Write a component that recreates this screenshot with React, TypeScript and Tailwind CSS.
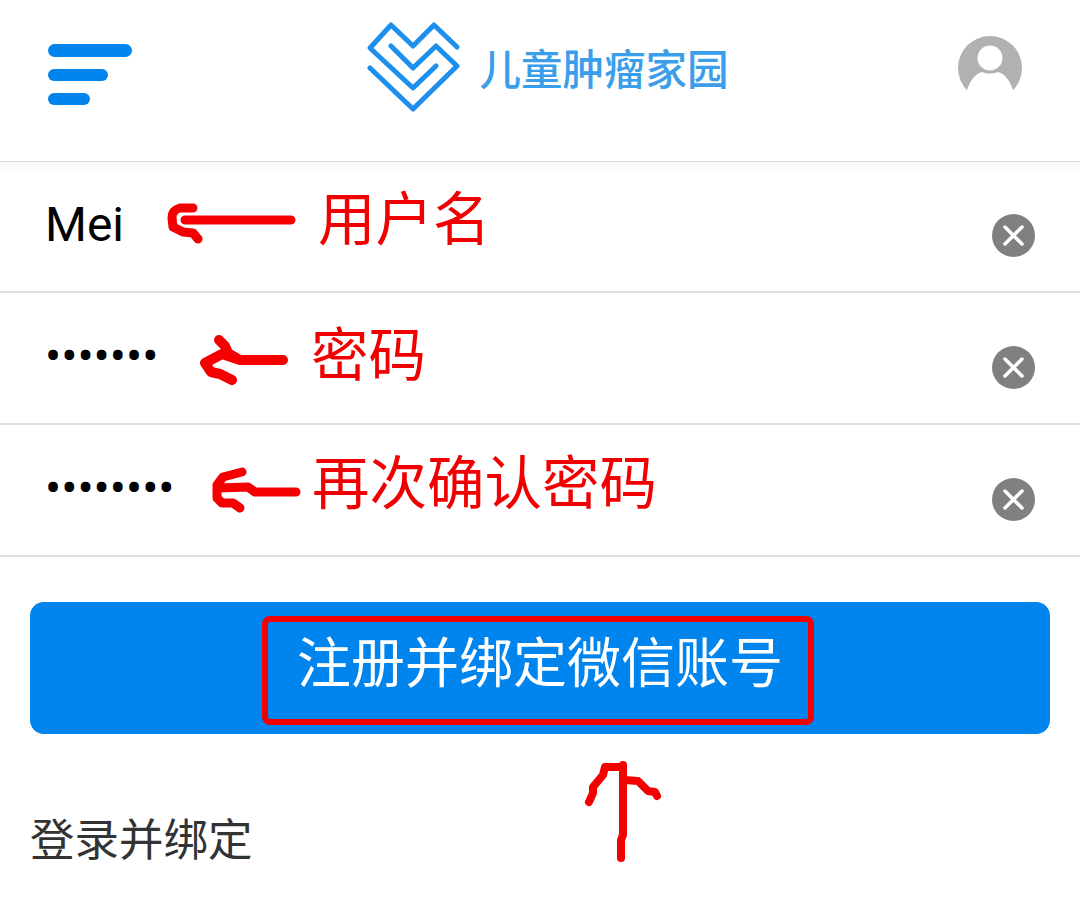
import React from 'react';

const CJK = '"Noto Sans CJK SC", sans-serif';

// Red marks that someone drew on top of the screenshot
const scribbles = [
  { d: 'M291 220 L185 220 M193 208 L180 208 Q172 210 172 218 L173 227 L183 232 L193 233 L198 239', w: 9 },
  { d: 'M283 360 L240 360 L228 353 L225 346 L219 340 M240 360 L222 354 L205 363 L211 372 L220 374 L232 380', w: 10 },
  { d: 'M296 492 L255 492 L248 487 L218 488 M242 472 L223 477 L217 485 L217 498 L222 503 L233 503 L240 508', w: 9 },
  { d: 'M623 765 L623 835 L621 840 L621 858 M623 767 L605 767 L603 775 L593 787 L593 793 L589 802 M625 780 L638 781 L648 791 L655 792 L657 796', w: 8 },
];

const Logo: React.FC = () => (
  <div className="ml-[4px] flex items-center gap-[18px]">
    <svg width="96" height="92" viewBox="0 0 96 92" fill="none" stroke="#1d8fec" strokeWidth="5" strokeLinecap="round" strokeLinejoin="round">
      <path d="M92 27 L69 5 L48 26 L26 5 L5 28 L48 68 L71 46" />
      <path d="M26 26 L48 48 L71 26 L92 46 L48 89 L5 48" />
    </svg>
    <span className="mt-[3px] text-[41.5px] leading-none text-[#3b9eea] font-medium" style={{ fontFamily: CJK }}>
      儿童肿瘤家园
    </span>
  </div>
);

const Avatar: React.FC = () => (
  <svg width="64" height="70" viewBox="0 0 64 70">
    <circle cx="32" cy="32" r="32" fill="#b1b1b1" />
    <circle cx="32" cy="22" r="12.5" fill="#fff" />
    <path d="M9 54 C12 46 16 38 24 36 Q32 39 40 36 C48 38 52 46 55 54 L56 70 L8 70 Z" fill="#fff" />
  </svg>
);

const ClearButton: React.FC = () => (
  <span className="flex h-[43px] w-[43px] items-center justify-center rounded-full bg-[#808080]">
    <svg width="23" height="23" viewBox="0 0 23 23" stroke="#fff" strokeWidth="3.5" strokeLinecap="round">
      <path d="M3 3 L20 20 M20 3 L3 20" />
    </svg>
  </span>
);

const FormRow: React.FC<{ value: string; className?: string }> = ({ value, className = '' }) => (
  <div className={`flex h-[132px] items-center justify-between border-b-2 border-[#dedede] pl-[45px] pr-[45px] ${className}`}>
    <span className="mb-[3px] text-[48px] leading-none text-black" style={{ fontFamily: 'Roboto, sans-serif' }}>
      {value}
    </span>
    <span className="mt-[18px]">
      <ClearButton />
    </span>
  </div>
);

export default function App() {
  return (
    <div className="relative h-[908px] w-[1080px] overflow-hidden bg-white" style={{ fontFamily: CJK }}>
      <header className="relative flex h-[162px] items-start justify-between border-b border-[#dcdcdc] pl-[48px] pr-[58px] shadow-[0_4px_10px_rgba(0,0,0,0.05)]">
        <div className="mt-[44px] flex flex-col gap-[12px]">
          <div className="h-[13px] w-[84px] rounded-full bg-[#0084ed]" />
          <div className="h-[12px] w-[60px] rounded-full bg-[#0084ed]" />
          <div className="h-[12px] w-[42px] rounded-full bg-[#0084ed]" />
        </div>
        <div className="mt-[20px]">
          <Logo />
        </div>
        <div className="mt-[36px]">
          <Avatar />
        </div>
      </header>

      <FormRow value="Mei" className="-mt-px" />
      <FormRow value="•••••••" />
      <FormRow value="••••••••" />

      <div className="px-[30px] pt-[45px]">
        <button className="flex h-[132px] w-full items-start justify-center rounded-[14px] bg-[#0084ed] pt-[21px] text-[54px] leading-[74px] text-white">
          注册并绑定微信账号
        </button>
        <div className="mt-[72px] text-[44.5px] leading-[62px] text-[#333]">登录并绑定</div>
      </div>

      {/* annotations over the page */}
      <span className="absolute left-[318px] top-[176px] text-[57.5px] leading-[78px] text-[#f00000]">用户名</span>
      <span className="absolute left-[311px] top-[312px] text-[57.5px] leading-[78px] text-[#f00000]">密码</span>
      <span className="absolute left-[312px] top-[440px] text-[57.5px] leading-[78px] text-[#f00000]">再次确认密码</span>
      <div className="absolute left-[262px] top-[616px] h-[109px] w-[552px] rounded-[8px] border-[6px] border-[#f50000]" />
      <svg className="absolute left-0 top-0" width="1080" height="908" fill="none" stroke="#f50000" strokeLinecap="round" strokeLinejoin="round">
        {scribbles.map((s) => (
          <path key={s.d} d={s.d} strokeWidth={s.w} />
        ))}
      </svg>
    </div>
  );
}
